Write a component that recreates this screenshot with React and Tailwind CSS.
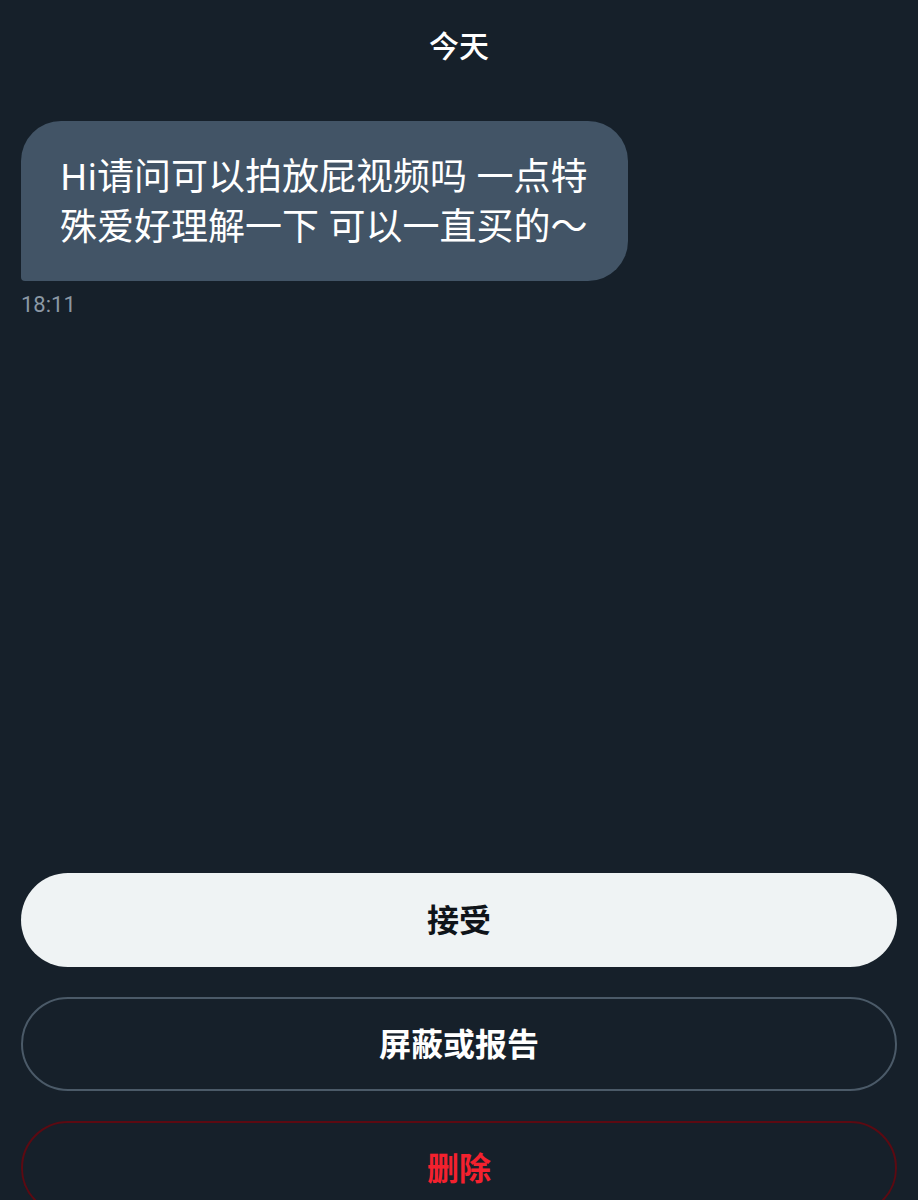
export default function App() {
  const font = { fontFamily: '"Noto Sans", "Noto Sans CJK SC", sans-serif' };
  return (
    <div className="w-[918px] h-[1200px] overflow-hidden bg-[#16202a] text-white" style={font}>
      <div className="pt-[26px] text-center text-[30px] leading-[40px] font-medium">今天</div>
      <div className="mt-[55px] pl-[21px]">
        <div className="w-[607px] h-[160px] bg-[#425466] rounded-[40px] rounded-bl-[4px] pt-[30px] pl-[39px] text-[37px] leading-[50px] text-white">
          <div className="whitespace-nowrap">Hi请问可以拍放屁视频吗 一点特</div>
          <div className="whitespace-nowrap">殊爱好理解一下 可以一直买的～</div>
        </div>
        <div className="mt-[9px] text-[22px] leading-[30px] text-[#8b98a5]" style={{ fontFamily: 'Roboto, sans-serif' }}>18:11</div>
      </div>
      <div className="mt-[553px] px-[21px] flex flex-col gap-[30px]">
        <div className="h-[94px] rounded-full bg-[#eff3f4] flex items-center justify-center text-[32px] font-bold text-[#0f1419]">接受</div>
        <div className="h-[94px] rounded-full border-2 border-[#4b5a68] flex items-center justify-center text-[32px] font-bold text-white">屏蔽或报告</div>
        <div className="h-[94px] shrink-0 rounded-full border-2 border-[#5c0a12] flex items-center justify-center text-[32px] font-bold text-[#f4212e]">删除</div>
      </div>
    </div>
  );
}
